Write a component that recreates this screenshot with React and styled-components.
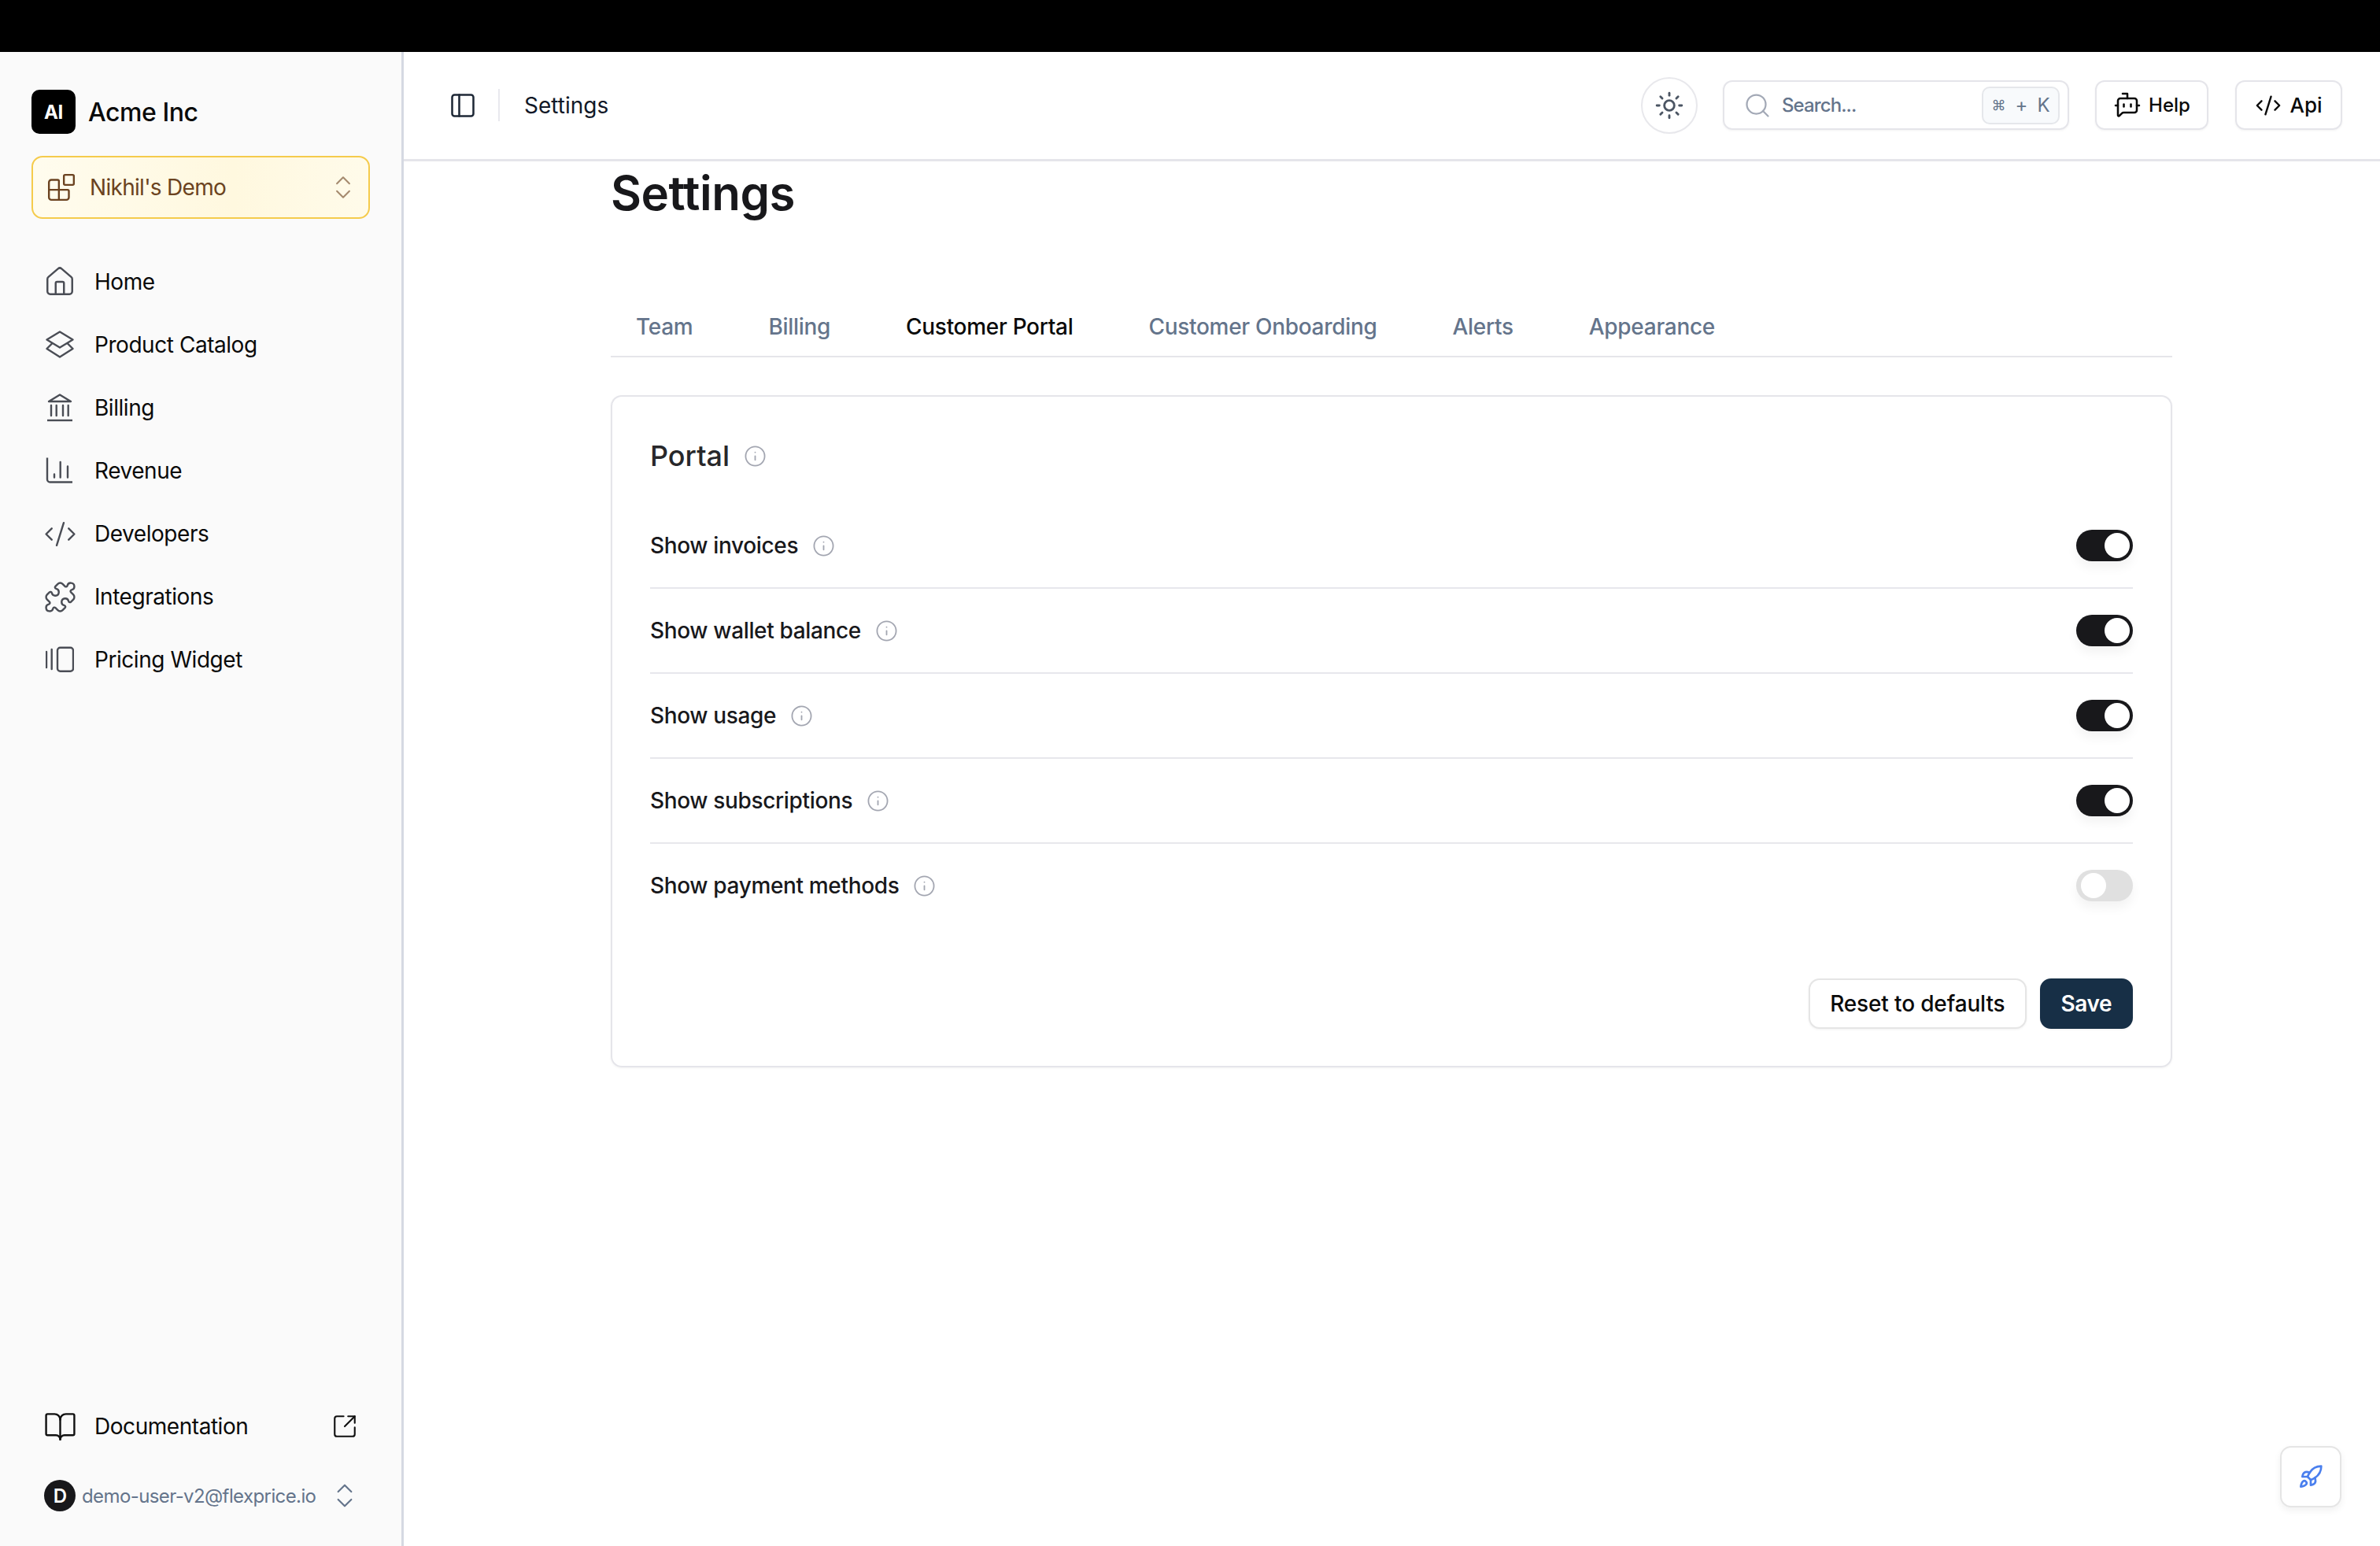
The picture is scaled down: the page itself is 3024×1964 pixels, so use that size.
import React from "react";
import styled, { createGlobalStyle } from "styled-components";
import {
  House,
  CodeXml,
  Puzzle,
  ChevronsUpDown,
  Blocks,
  BookOpen,
  SquareArrowOutUpRight,
  PanelLeft,
  Sun,
  Search,
  BotMessageSquare,
  Info,
  Rocket,
} from "lucide-react";

const GlobalStyle = createGlobalStyle`
  * { box-sizing: border-box; }
  html, body { margin: 0; padding: 0; background: #fff; }
  body {
    font-family: Inter, "Liberation Sans", sans-serif;
    color: #18181b;
    letter-spacing: -0.45px;
  }
`;

const Page = styled.div`
  display: flex;
  flex-direction: column;
  width: 100%;
  height: 1964px;
  overflow: hidden;
`;

const TopStrip = styled.div`
  height: 66px;
  flex: none;
  background: #000;
`;

const Body = styled.div`
  display: flex;
  flex: 1;
  min-height: 0;
`;

const Sidebar = styled.aside`
  width: 513px;
  flex: none;
  display: flex;
  flex-direction: column;
  padding: 48px 40px 44px;
  background: #fafafa;
  border-right: 3px solid #d5d9e2;
`;

const Brand = styled.div`
  display: flex;
  align-items: center;
  gap: 16px;
  height: 56px;
`;

const BrandMark = styled.div`
  width: 56px;
  height: 56px;
  display: flex;
  align-items: center;
  justify-content: center;
  background: #000;
  color: #fff;
  border-radius: 10px;
  font-size: 24px;
  font-weight: 700;
`;

const BrandName = styled.div`
  font-size: 32px;
  font-weight: 500;
  color: #0a0a0a;
`;

const Workspace = styled.div`
  display: flex;
  align-items: center;
  height: 80px;
  margin-top: 28px;
  padding: 0 13px 0 20px;
  background: linear-gradient(90deg, #fffcee, #fff8df 60%, #fffbea);
  border: 2px solid #f5cb4c;
  border-radius: 14px;
  color: #6b4320;
  font-size: 28px;
  font-weight: 400;
  letter-spacing: -0.7px;
`;

const WorkspaceName = styled.span`
  flex: 1;
  margin-left: 20px;
`;

const IconSlot = styled.span`
  width: ${(props) => props.$w || 36}px;
  height: 36px;
  flex: none;
  display: flex;
  align-items: center;
  justify-content: center;
  svg {
    flex: none;
  }
`;

const Nav = styled.nav`
  display: flex;
  flex-direction: column;
  margin-top: 40px;
`;

const NavRow = styled.div`
  display: flex;
  align-items: center;
  gap: 26px;
  height: 80px;
  padding-left: 18px;
  font-size: 28px;
  color: #0a0a0a;
  svg {
    color: #4a4d55;
  }
`;

const SideFooter = styled.div`
  display: flex;
  flex-direction: column;
  margin-top: auto;
`;

const DocRow = styled(NavRow)`
  height: 48px;
  margin-bottom: 44px;
  padding-right: 15px;
  svg {
    color: #111;
  }
`;

const DocLabel = styled.span`
  flex: 1;
`;

const UserRow = styled.div`
  display: flex;
  align-items: center;
  height: 40px;
  padding: 0 12px 0 16px;
  font-size: 24px;
  letter-spacing: -0.6px;
  color: #64748b;
`;

const Avatar = styled.div`
  width: 40px;
  height: 40px;
  flex: none;
  display: flex;
  align-items: center;
  justify-content: center;
  margin-right: 8px;
  border-radius: 50%;
  background: #18181b;
  color: #fff;
  font-size: 24px;
  font-weight: 600;
`;

const UserEmail = styled.span`
  flex: 1;
`;

const Main = styled.div`
  flex: 1;
  min-width: 0;
  display: flex;
  flex-direction: column;
`;

const Header = styled.header`
  height: 139px;
  flex: none;
  display: flex;
  align-items: center;
  padding: 0 48px 1px 57px;
  border-bottom: 3px solid #e5e5ea;
`;

const HeaderDivider = styled.div`
  width: 2px;
  height: 41px;
  margin: 0 31px 0 27px;
  background: #e9e9ee;
`;

const Crumb = styled.div`
  flex: 1;
  font-size: 28px;
  letter-spacing: 0;
  color: #111827;
`;

const ThemeButton = styled.div`
  width: 72px;
  height: 72px;
  display: flex;
  align-items: center;
  justify-content: center;
  margin-right: 32px;
  border: 2px solid #e8e8ec;
  border-radius: 50%;
  color: #4b5563;
`;

const SearchBox = styled.div`
  width: 440px;
  height: 63px;
  display: flex;
  align-items: center;
  padding: 0 10px 0 24px;
  margin-right: 33px;
  border: 2px solid #e5e5ea;
  border-radius: 12px;
  box-shadow: 0 1px 3px rgba(0, 0, 0, 0.05);
  color: #a3a9b6;
`;

const SearchText = styled.span`
  flex: 1;
  margin-left: 13px;
  font-size: 24px;
  font-weight: 500;
  letter-spacing: -0.9px;
  color: #64748b;
`;

const Kbd = styled.span`
  width: 99px;
  height: 48px;
  display: flex;
  align-items: center;
  justify-content: center;
  gap: 12px;
  background: #f8fafc;
  border: 2px solid #e5e7eb;
  border-radius: 10px;
  font-size: 24px;
  letter-spacing: 0;
  color: #64748b;
`;

const KbdCommand = styled.span`
  font-size: 18px;
`;

const HeadButton = styled.div`
  height: 63px;
  width: ${(props) => props.$w}px;
  display: flex;
  align-items: center;
  justify-content: center;
  gap: ${(props) => props.$gap}px;
  margin-right: ${(props) => props.$mr}px;
  border: 2px solid #e5e5ea;
  border-radius: 12px;
  box-shadow: 0 1px 3px rgba(0, 0, 0, 0.05);
  font-size: ${(props) => props.$size}px;
  font-weight: 500;
  letter-spacing: 0;
  color: #0a0a0a;
`;

const Content = styled.main`
  padding: 0 264px 0 263px;
`;

const Title = styled.h1`
  margin: 0;
  height: 80px;
  line-height: 80px;
  font-size: 60px;
  font-weight: 600;
  letter-spacing: -0.5px;
  color: #18181b;
`;

const Tabs = styled.div`
  display: flex;
  gap: 32px;
  height: 77px;
  margin-top: 92px;
  border-bottom: 2px solid #e5e5ea;
`;

const Tab = styled.div`
  padding: 0 32px;
  display: flex;
  align-items: center;
  font-size: 28px;
  font-weight: 500;
  letter-spacing: -0.3px;
  color: ${(props) => (props.$active ? "#0a0a0a" : "#64748b")};
`;

const Card = styled.section`
  margin-top: 48px;
  padding: 48px 48px 47px;
  border: 2px solid #e5e5ea;
  border-radius: 14px;
  box-shadow: 0 1px 3px rgba(0, 0, 0, 0.05);
`;

const CardTitle = styled.div`
  display: flex;
  align-items: center;
  gap: 18px;
  height: 54px;
  margin-bottom: 34px;
  font-size: 36px;
  font-weight: 500;
  letter-spacing: 0;
  color: #27272a;
  svg {
    color: #a3a6b1;
  }
`;

const Row = styled.div`
  display: flex;
  align-items: center;
  justify-content: space-between;
  height: 108px;
  border-bottom: 2px solid ${(props) => (props.$last ? "transparent" : "#e7e7ec")};
`;

const RowLabel = styled.div`
  display: flex;
  align-items: center;
  gap: 18px;
  font-size: 28px;
  font-weight: 500;
  letter-spacing: -0.35px;
  color: #18181b;
  svg {
    color: #a3a6b1;
  }
`;

const Toggle = styled.div`
  width: 72px;
  height: 40px;
  display: flex;
  align-items: center;
  justify-content: ${(props) => (props.$on ? "flex-end" : "flex-start")};
  padding: ${(props) => (props.$on ? "0 4px 0 0" : "0 0 0 6px")};
  border-radius: 20px;
  background: ${(props) => (props.$on ? "#18181b" : "#e0e0e0")};
  box-shadow: 0 8px 14px rgba(0, 0, 0, 0.05);
`;

const Thumb = styled.div`
  width: 32px;
  height: 32px;
  border-radius: 50%;
  background: #fff;
`;

const Actions = styled.div`
  display: flex;
  justify-content: flex-end;
  gap: 17px;
  margin-top: 63px;
`;

const Button = styled.div`
  height: 64px;
  display: flex;
  align-items: center;
  padding: 0 25px;
  border: 2px solid ${(props) => (props.$primary ? "#172f46" : "#e5e5e5")};
  border-radius: 14px;
  background: ${(props) => (props.$primary ? "#172f46" : "#fff")};
  color: ${(props) => (props.$primary ? "#fff" : "#0a0a0a")};
  font-size: 28px;
  font-weight: ${(props) => (props.$primary ? 600 : 500)};
  letter-spacing: ${(props) => (props.$primary ? "-0.45px" : "-0.15px")};
  box-shadow: 0 1px 3px rgba(0, 0, 0, 0.06);
`;

const Launcher = styled.div`
  position: fixed;
  right: 49px;
  bottom: 49px;
  width: 78px;
  height: 78px;
  display: flex;
  align-items: center;
  justify-content: center;
  background: #fff;
  border: 2px solid #e5e5e5;
  border-radius: 14px;
  box-shadow: 0 4px 10px rgba(0, 0, 0, 0.06);
  color: #4a7fee;
`;

// hand drawn, lucide has no close match for these
const LayersIcon = () => (
  <svg width="36" height="36" viewBox="0 0 36 36" fill="none" stroke="currentColor" strokeWidth="2.4" strokeLinejoin="round" strokeLinecap="round">
    <path d="M18 1.5 34.5 11.5 18 21.5 1.5 11.5Z" />
    <path d="M8 16.5 1.5 23 18 33.5 34.5 23 28 16.5" />
  </svg>
);

const BankIcon = () => (
  <svg width="36" height="36" viewBox="0 0 36 36" fill="none" stroke="currentColor" strokeWidth="2.4" strokeLinecap="round" strokeLinejoin="round">
    <path d="M4 10 18 1.5 32 10Z" />
    <path d="M7 15v13M13.7 15v13M22 15v13M28.7 15v13" />
    <path d="M2 34h32" strokeLinecap="butt" />
  </svg>
);

const ChartIcon = () => (
  <svg width="36" height="36" viewBox="0 0 36 36" fill="none" stroke="currentColor" strokeWidth="2.4" strokeLinecap="round" strokeLinejoin="round">
    <path d="M2 1.5V29a3.5 3.5 0 0 0 3.5 3.5H34" strokeLinecap="butt" />
    <path d="M11 22.5v4M18.7 7v19.5M28 12.5v14" />
  </svg>
);

const WidgetIcon = () => (
  <svg width="36" height="36" viewBox="0 0 36 36" fill="none" stroke="currentColor" strokeWidth="2.4" strokeLinecap="round" strokeLinejoin="round">
    <rect x="15" y="2.8" width="20" height="30" rx="3.5" />
    <path d="M1 8v20M7.7 5v25" />
  </svg>
);

const navItems = [
  { label: "Home", icon: <House size={42} strokeWidth={1.4} /> },
  { label: "Product Catalog", icon: <LayersIcon /> },
  { label: "Billing", icon: <BankIcon /> },
  { label: "Revenue", icon: <ChartIcon /> },
  { label: "Developers", icon: <CodeXml size={43} strokeWidth={1.35} /> },
  { label: "Integrations", icon: <Puzzle size={43} strokeWidth={1.35} /> },
  { label: "Pricing Widget", icon: <WidgetIcon /> },
];

const tabs = ["Team", "Billing", "Customer Portal", "Customer Onboarding", "Alerts", "Appearance"];

const rows = [
  { label: "Show invoices", on: true },
  { label: "Show wallet balance", on: true },
  { label: "Show usage", on: true },
  { label: "Show subscriptions", on: true },
  { label: "Show payment methods", on: false },
];

export default function App() {
  return (
    <Page>
      <GlobalStyle />
      <TopStrip />
      <Body>
        <Sidebar>
          <Brand>
            <BrandMark>AI</BrandMark>
            <BrandName>Acme Inc</BrandName>
          </Brand>
          <Workspace>
            <IconSlot $w={32}>
              <Blocks size={38} strokeWidth={1.5} />
            </IconSlot>
            <WorkspaceName>Nikhil's Demo</WorkspaceName>
            <ChevronsUpDown size={38} strokeWidth={1.3} color="#a58a6e" />
          </Workspace>
          <Nav>
            {navItems.map((item) => (
              <NavRow key={item.label}>
                <IconSlot>{item.icon}</IconSlot>
                <span>{item.label}</span>
              </NavRow>
            ))}
          </Nav>
          <SideFooter>
            <DocRow>
              <IconSlot>
                <BookOpen size={43} strokeWidth={1.35} />
              </IconSlot>
              <DocLabel>Documentation</DocLabel>
              <SquareArrowOutUpRight size={34} strokeWidth={1.5} />
            </DocRow>
            <UserRow>
              <Avatar>D</Avatar>
              <UserEmail>demo-user-v2@flexprice.io</UserEmail>
              <ChevronsUpDown size={40} strokeWidth={1.3} color="#64748b" />
            </UserRow>
          </SideFooter>
        </Sidebar>
        <Main>
          <Header>
            <PanelLeft size={36} strokeWidth={1.7} color="#1f2937" />
            <HeaderDivider />
            <Crumb>Settings</Crumb>
            <ThemeButton>
              <Sun size={38} strokeWidth={1.8} />
            </ThemeButton>
            <SearchBox>
              <Search size={36} strokeWidth={1.5} />
              <SearchText>Search...</SearchText>
              <Kbd>
                <KbdCommand>⌘</KbdCommand>+<span>K</span>
              </Kbd>
            </SearchBox>
            <HeadButton $w={144} $gap={9} $mr={34} $size={24}>
              <BotMessageSquare size={36} strokeWidth={1.7} />
              Help
            </HeadButton>
            <HeadButton $w={136} $gap={10} $mr={0} $size={26}>
              <CodeXml size={34} strokeWidth={1.7} />
              Api
            </HeadButton>
          </Header>
          <Content>
            <Title>Settings</Title>
            <Tabs>
              {tabs.map((tab) => (
                <Tab key={tab} $active={tab === "Customer Portal"}>
                  {tab}
                </Tab>
              ))}
            </Tabs>
            <Card>
              <CardTitle>
                Portal
                <Info size={29} strokeWidth={1.5} />
              </CardTitle>
              {rows.map((row, i) => (
                <Row key={row.label} $last={i === rows.length - 1}>
                  <RowLabel>
                    {row.label}
                    <Info size={29} strokeWidth={1.5} />
                  </RowLabel>
                  <Toggle $on={row.on}>
                    <Thumb />
                  </Toggle>
                </Row>
              ))}
              <Actions>
                <Button>Reset to defaults</Button>
                <Button $primary>Save</Button>
              </Actions>
            </Card>
          </Content>
        </Main>
      </Body>
      <Launcher>
        <Rocket size={32} strokeWidth={2} />
      </Launcher>
    </Page>
  );
}
